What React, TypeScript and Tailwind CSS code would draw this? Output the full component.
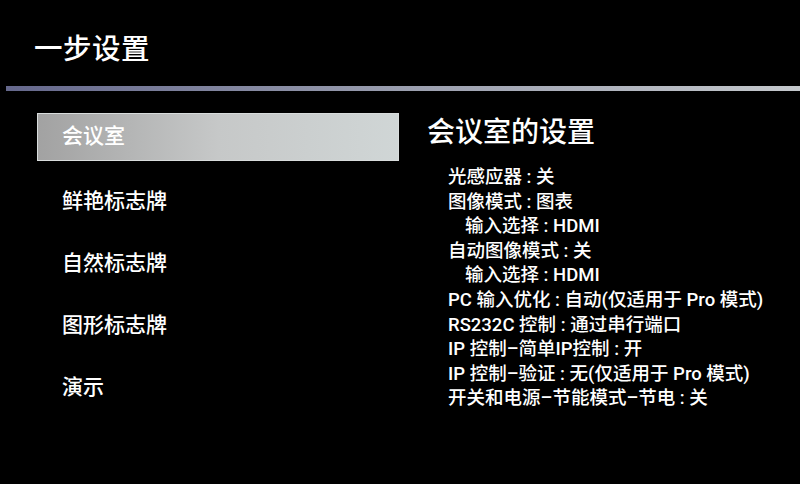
import React from 'react';

const menuItems = ['会议室', '鲜艳标志牌', '自然标志牌', '图形标志牌', '演示'];

const settings: { text: string; indent?: boolean }[] = [
  { text: '光感应器 : 关' },
  { text: '图像模式 : 图表' },
  { text: '输入选择 : HDMI', indent: true },
  { text: '自动图像模式 : 关' },
  { text: '输入选择 : HDMI', indent: true },
  { text: 'PC 输入优化 : 自动(仅适用于 Pro 模式)' },
  { text: 'RS232C 控制 : 通过串行端口' },
  { text: 'IP 控制–简单IP控制 : 开' },
  { text: 'IP 控制–验证 : 无(仅适用于 Pro 模式)' },
  { text: '开关和电源–节能模式–节电 : 关' },
];

export default function App() {
  return (
    <div
      className="w-[800px] h-[484px] bg-black text-white overflow-hidden"
      style={{ fontFamily: 'Roboto, "Noto Sans CJK SC", sans-serif' }}
    >
      {/* Header */}
      <div className="h-[86px] pl-[34px] pt-[30px]">
        <h1 className="text-[28.5px] leading-[40px] font-medium tracking-[0.5px]">一步设置</h1>
      </div>
      <div className="ml-[6px] h-[5px] bg-gradient-to-r from-[#65688c] via-[#9a9eae] to-[#c4c8cc]" />

      <div className="flex pt-[22px]">
        {/* Left menu */}
        <div className="w-[362px] ml-[37px] flex flex-col">
          {menuItems.map((item, i) => (
            <div
              key={item}
              className={
                i === 0
                  ? 'h-[48px] flex items-center pl-[24px] border border-[#d8dcdc] bg-gradient-to-r from-[#a2a2a2] via-[#c6c8c8] to-[#d0d6d6] mb-[10px]'
                  : 'h-[62px] flex items-center pl-[25px]'
              }
            >
              <span className="text-[21px] font-medium">{item}</span>
            </div>
          ))}
        </div>

        {/* Right panel */}
        <div className="ml-[28px] flex flex-col">
          <h2 className="text-[28px] leading-[36px] font-medium mt-[2px]">会议室的设置</h2>
          <div className="mt-[14px] pl-[21px] flex flex-col">
            {settings.map((s, i) => (
              <div
                key={i}
                className={`text-[18.5px] leading-[24.6px] font-medium ${s.indent ? 'pl-[17px]' : ''}`}
              >
                {s.text}
              </div>
            ))}
          </div>
        </div>
      </div>
    </div>
  );
}
